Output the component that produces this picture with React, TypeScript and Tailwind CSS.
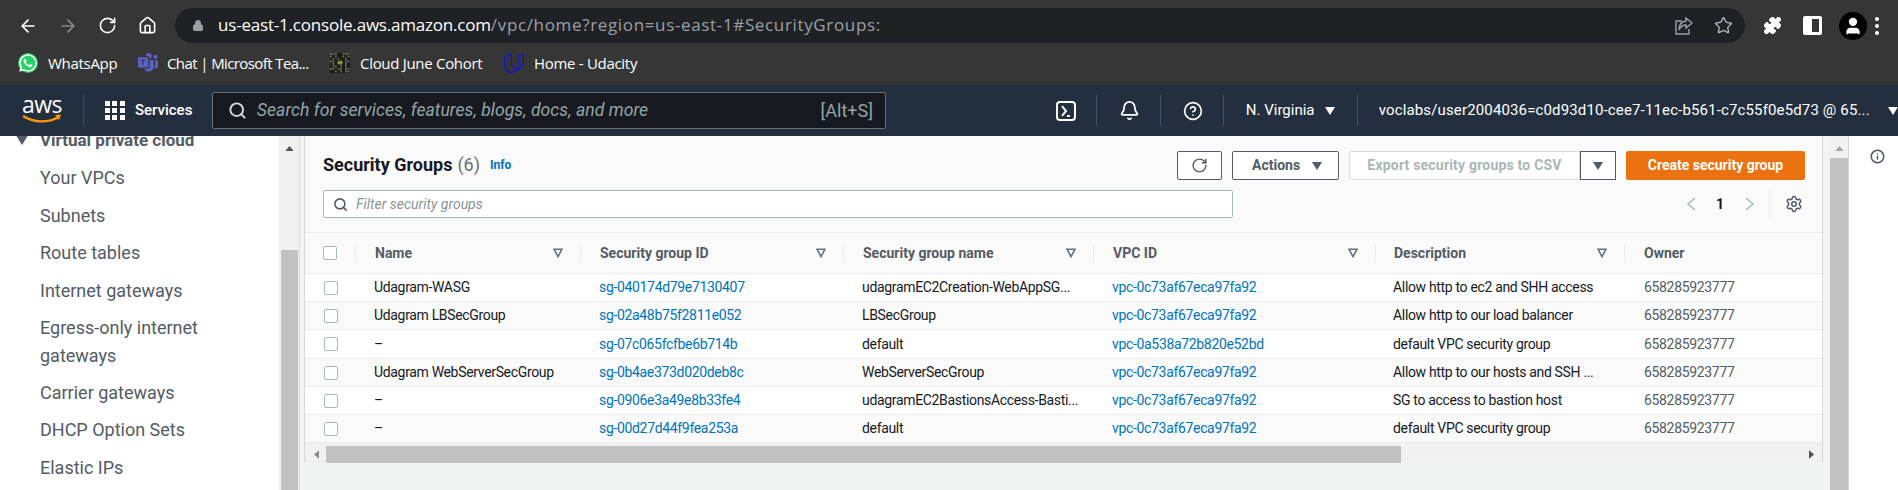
import { ArrowLeft, ArrowRight, RotateCw, Home, Lock, Star, Puzzle, User, Search, Bell, CircleHelp, Info, Settings } from "lucide-react";
import { FaWhatsapp } from "react-icons/fa";
import { SiUdacity } from "react-icons/si";
import { BsMicrosoftTeams } from "react-icons/bs";

const font = "font-['Roboto','Liberation_Sans',sans-serif]";

const navItems = [
  { t: "Your VPCs", h: "h-[38px]" },
  { t: "Subnets", h: "h-[37px]" },
  { t: "Route tables", h: "h-[38px]" },
  { t: "Internet gateways", h: "h-[37px]" },
  { t: "Egress-only internet gateways", h: "h-[65px]" },
  { t: "Carrier gateways", h: "h-[37px]" },
  { t: "DHCP Option Sets", h: "h-[38px]" },
  { t: "Elastic IPs", h: "h-[37px]" },
];

const columns = ["Name", "Security group ID", "Security group name", "VPC ID", "Description", "Owner"];

const rows = [
  { h: "h-[28px]", c: ["Udagram-WASG", "sg-040174d79e7130407", "udagramEC2Creation-WebAppSG...", "vpc-0c73af67eca97fa92", "Allow http to ec2 and SHH access"] },
  { h: "h-[28px]", c: ["Udagram LBSecGroup", "sg-02a48b75f2811e052", "LBSecGroup", "vpc-0c73af67eca97fa92", "Allow http to our load balancer"] },
  { h: "h-[29px]", c: ["–", "sg-07c065fcfbe6b714b", "default", "vpc-0a538a72b820e52bd", "default VPC security group"] },
  { h: "h-[28px]", c: ["Udagram WebServerSecGroup", "sg-0b4ae373d020deb8c", "WebServerSecGroup", "vpc-0c73af67eca97fa92", "Allow http to our hosts and SSH ..."] },
  { h: "h-[28px]", c: ["–", "sg-0906e3a49e8b33fe4", "udagramEC2BastionsAccess-Basti...", "vpc-0c73af67eca97fa92", "SG to access to bastion host"] },
  { h: "h-[28px]", c: ["–", "sg-00d27d44f9fea253a", "default", "vpc-0c73af67eca97fa92", "default VPC security group"] },
];

const gridCols = "grid grid-cols-[50px_225px_263px_250px_282px_249px_199px]";

function Caret({ className = "" }: { className?: string }) {
  return (
    <svg viewBox="0 0 10 8" className={className} fill="currentColor">
      <path d="M0 0h10L5 8z" />
    </svg>
  );
}

function FilterIcon() {
  return (
    <svg viewBox="0 0 10 10" className="w-[10px] h-[10px] text-[#687078]" fill="none" stroke="currentColor" strokeWidth="1.6">
      <path d="M1 1.2h8L5 8.6z" />
    </svg>
  );
}

function Checkbox() {
  return <span className="block w-[14px] h-[14px] rounded-[2px] border border-[#aab7b8] bg-white" />;
}

function QrIcon() {
  const cells = [0, 1, 2, 5, 6, 7, 8, 10, 13, 15, 17, 19, 22, 24, 25, 28, 30, 31, 33, 36, 38, 41, 42, 44, 46, 48, 49, 51, 52, 54, 55, 58, 60, 62, 63];
  return (
    <svg viewBox="0 0 64 64" className="w-[20px] h-[20px]">
      <rect width="64" height="64" fill="#1c1c1a" />
      {cells.map((c) => (
        <rect key={c} x={(c % 8) * 8} y={Math.floor(c / 8) * 8} width="6" height="6" fill="#6b6a5c" />
      ))}
      <rect x="24" y="26" width="16" height="10" fill="#7f9a3a" />
    </svg>
  );
}

function ChromeShare() {
  return (
    <svg viewBox="0 0 20 20" className="w-[20px] h-[20px]" fill="none" stroke="currentColor" strokeWidth="1.4">
      <path d="M8 5H2v13h13v-5" />
      <path d="M12 2l6 5-6 5V9C8.5 9 6.5 10.5 5 14c0-5 2.500-8.500 7-9z" />
    </svg>
  );
}

function ChromeBar() {
  return (
    <div className="bg-[#363636] h-[85px] border-b border-[#5f6368] box-content -mb-px">
      <div className="flex items-center h-[46px] pt-[5px]">
        <ArrowLeft className="w-[20px] h-[20px] ml-[18px] text-white" strokeWidth={2} />
        <ArrowRight className="w-[20px] h-[20px] ml-[20px] text-[#8a8a8a]" strokeWidth={2} />
        <RotateCw className="w-[19px] h-[19px] ml-[20px] text-white" strokeWidth={2} />
        <Home className="w-[19px] h-[19px] ml-[21px] text-white" strokeWidth={2} />
        <div className="flex items-center w-[1570px] h-[35px] ml-[18px] rounded-full bg-[#202124] pl-[17px]">
          <Lock className="w-[12px] h-[13px] text-[#9aa0a6]" fill="#9aa0a6" strokeWidth={2} />
          <div className="ml-[14px] -mt-[2px] text-[17px] font-['Open_Sans',sans-serif] whitespace-nowrap">
            <span className="text-white tracking-[-0.2px]">us-east-1.console.aws.amazon.com</span>
            <span className="text-[#9aa0a6] tracking-[0.65px]">/vpc/home?region=us-east-1#SecurityGroups:</span>
          </div>
          <div className="ml-auto flex items-center pr-[12px] text-[#9aa0a6]">
            <ChromeShare />
            <Star className="w-[19px] h-[19px] ml-[20px] text-[#bdc1c6]" strokeWidth={1.6} />
          </div>
        </div>
        <Puzzle className="w-[19px] h-[19px] ml-[18px] text-white" fill="white" strokeWidth={1.5} />
        <span className="block w-[19px] h-[19px] ml-[21px] border-[3px] border-white border-l-[9px] rounded-[2px] border-l-white" />
        <span className="flex items-center justify-center w-[28px] h-[28px] ml-[17px] rounded-full bg-black">
          <User className="w-[20px] h-[20px] text-white" fill="white" strokeWidth={2} />
        </span>
        <span className="ml-[8px] flex flex-col gap-[3px]">
          <i className="block w-[4px] h-[4px] rounded-full bg-white" />
          <i className="block w-[4px] h-[4px] rounded-full bg-white" />
          <i className="block w-[4px] h-[4px] rounded-full bg-white" />
        </span>
      </div>
      <div className="flex items-center h-[34px] pl-[18px] text-[15px] text-white font-['Open_Sans',sans-serif] tracking-[-0.3px]">
        <span className="flex items-center justify-center w-[20px] h-[20px] rounded-full bg-[#25d366] text-white">
          <FaWhatsapp className="w-[20px] h-[20px]" />
        </span>
        <span className="ml-[10px] w-[90px]">WhatsApp</span>
        <BsMicrosoftTeams className="w-[20px] h-[20px] text-[#5b5fc7]" />
        <span className="ml-[9px] w-[163px] whitespace-nowrap tracking-[-0.6px]">Chat | Microsoft Tea...</span>
        <QrIcon />
        <span className="ml-[10px] w-[144px] whitespace-nowrap">Cloud June Cohort</span>
        <SiUdacity className="w-[20px] h-[20px] text-[#1414d8]" />
        <span className="ml-[10px] whitespace-nowrap">Home - Udacity</span>
      </div>
    </div>
  );
}

function Divider({ className = "" }: { className?: string }) {
  return <span className={`block w-px h-[31px] bg-[#414d5c] ${className}`} />;
}

function AwsHeader() {
  return (
    <div className={`flex items-center h-[51px] bg-[#232f3e] text-white ${font}`}>
      <div className="ml-[22px] -mt-[2px] w-[40px] flex flex-col items-center">
        <span className="text-[23px] leading-[18px] font-['Open_Sans',sans-serif] tracking-[-0.5px]">aws</span>
        <svg viewBox="0 0 40 10" className="w-[40px] h-[10px] mt-[1px]" fill="none">
          <path d="M1 2c11 7 25 7 36 1" stroke="#ff9900" strokeWidth="2.4" />
          <path d="M33 1l6-.5-2 5.5z" fill="#ff9900" />
        </svg>
      </div>
      <Divider className="ml-[21px]" />
      <div className="ml-[21px] grid grid-cols-3 gap-[2px] w-[20px]">
        {Array.from({ length: 9 }).map((_, i) => (
          <i key={i} className="block w-[5px] h-[5px] bg-white" />
        ))}
      </div>
      <span className="ml-[10px] w-[77px] text-[15px] font-medium">Services</span>
      <div className="flex items-center w-[675px] h-[37px] bg-[#16191f] border border-[#687078] rounded-[2px] pl-[15px] pr-[12px]">
        <Search className="w-[19px] h-[19px] text-[#d5dbdb]" strokeWidth={2.4} />
        <span className="ml-[10px] text-[17.6px] italic text-[#95a5a6] tracking-[0.03px]">Search for services, features, blogs, docs, and more</span>
        <span className="ml-auto text-[18px] text-[#95a5a6]">[Alt+S]</span>
      </div>
      <svg viewBox="0 0 20 20" className="w-[20px] h-[20px] ml-[170px]" fill="none" stroke="white" strokeWidth="2">
        <rect x="1" y="1" width="18" height="18" rx="3" />
        <path d="M6 5l4 5-4 5M11 15h3" />
      </svg>
      <Divider className="ml-[20px]" />
      <Bell className="w-[21px] h-[21px] ml-[22px]" strokeWidth={2} />
      <Divider className="ml-[20px]" />
      <CircleHelp className="w-[20px] h-[20px] ml-[22px]" strokeWidth={2} />
      <Divider className="ml-[20px]" />
      <span className="ml-[22px] w-[72px] text-[15px] whitespace-nowrap">N. Virginia</span>
      <Caret className="w-[10px] h-[8px] ml-[7px]" />
      <Divider className="ml-[22px]" />
      <span className="ml-[21px] w-[504px] text-[15px] whitespace-nowrap tracking-[0.14px]">voclabs/user2004036=c0d93d10-cee7-11ec-b561-c7c55f0e5d73 @ 65...</span>
      <Caret className="w-[10px] h-[8px] ml-[6px]" />
    </div>
  );
}

function Sidebar() {
  return (
    <div className={`flex w-[300px] shrink-0 ${font}`}>
      <div className="w-[279px] bg-white overflow-hidden text-[#545b64] text-[18px]">
        <div className="flex items-center h-[23px] -mt-[7px] pl-[16px] text-[17px] font-bold">
          <Caret className="w-[12px] h-[9px] mr-[12px]" />
          <span>Virtual private cloud</span>
        </div>
        <div className="mt-[7px]">
          {navItems.map((n) => (
            <div key={n.t} className={`${n.h} pl-[40px] pr-[60px] flex items-center leading-[28px]`}>
              {n.t}
            </div>
          ))}
        </div>
      </div>
      <div className="w-[21px] bg-[#f1f1f1] border-r border-[#d5dbdb] pr-[1px] pl-[2px] flex flex-col items-center">
        <svg viewBox="0 0 10 6" className="w-[9px] h-[5px] mt-[10px] text-[#505050] shrink-0" fill="currentColor">
          <path d="M5 0l5 6H0z" />
        </svg>
        <div className="w-full h-[240px] mt-[99px] bg-[#c1c1c1]" />
      </div>
    </div>
  );
}

function Table() {
  return (
    <div className="h-[327px] bg-[#fafafa] border-x border-[#d5dbdb] overflow-hidden">
      <div className="h-[97px] pt-[15px] pl-[18px] pr-[17px] border-b border-[#eaeded]">
        <div className="flex items-center h-[29px]">
          <div className="flex items-center -mt-[2px]">
            <span className="text-[18px] font-bold text-[#16191f]">Security Groups</span>
            <span className="ml-[5px] text-[18px] text-[#687078]">(6)</span>
            <span className="ml-[10px] text-[12px] font-bold text-[#0073bb]">Info</span>
          </div>
          <div className="ml-auto flex h-[29px] text-[14px] font-bold">
            <button className="flex items-center justify-center w-[45px] border border-[#545b64] rounded-[2px] bg-white text-[#545b64]">
              <RotateCw className="w-[17px] h-[17px]" strokeWidth={2} />
            </button>
            <button className="flex items-center justify-between w-[107px] ml-[10px] pl-[19px] pr-[16px] border border-[#545b64] rounded-[2px] bg-white text-[#545b64]">
              Actions
              <Caret className="w-[10px] h-[8px]" />
            </button>
            <button className="flex items-center justify-center w-[231px] ml-[10px] border border-[#d5dbdb] rounded-l-[2px] bg-white text-[#aab7b8] tracking-[0.2px]">
              Export security groups to CSV
            </button>
            <button className="flex items-center justify-center w-[36px] border border-[#545b64] bg-white text-[#545b64]">
              <Caret className="w-[10px] h-[8px]" />
            </button>
            <button className="w-[179px] ml-[10px] rounded-[2px] bg-[#ec7211] text-white">Create security group</button>
          </div>
        </div>
        <div className="flex items-center mt-[10px] h-[28px]">
          <div className="flex items-center w-[910px] h-[28px] bg-white border border-[#aab7b8] rounded-[2px] pl-[9px]">
            <Search className="w-[15px] h-[15px] text-[#545b64]" strokeWidth={2.5} />
            <span className="ml-[8px] text-[14px] italic text-[#879596]">Filter security groups</span>
          </div>
          <div className="ml-auto flex items-center h-[28px] pr-[2px]">
            <svg viewBox="0 0 10 14" className="w-[10px] h-[14px] text-[#aab7b8]" fill="none" stroke="currentColor" strokeWidth="1.5">
              <path d="M9 1L2 7l7 6" />
            </svg>
            <span className="ml-[20px] text-[14px] font-bold text-[#16191f]">1</span>
            <svg viewBox="0 0 10 14" className="w-[10px] h-[14px] ml-[21px] text-[#aab7b8]" fill="none" stroke="currentColor" strokeWidth="1.5">
              <path d="M1 1l7 6-7 6" />
            </svg>
            <span className="block w-px h-[28px] ml-[14px] bg-[#eaeded]" />
            <Settings className="w-[18px] h-[18px] ml-[15px] text-[#545b64]" strokeWidth={2} />
          </div>
        </div>
      </div>
      <div className={`${gridCols} h-[41px] border-b border-[#eaeded] items-center text-[14px] font-bold text-[#545b64]`}>
        <div className="pl-[18px] flex items-center h-[20px]">
          <Checkbox />
        </div>
        {columns.map((c, i) => (
          <div key={c} className={`flex items-center h-[20px] border-l border-[#eaeded] pr-[17px] justify-between ${i === 4 ? "pl-[18px]" : "pl-[19px]"}`}>
            <span>{c}</span>
            {i < 5 && <FilterIcon />}
          </div>
        ))}
      </div>
      {rows.map((r, idx) => (
        <div key={r.c[1]} className={`${gridCols} ${r.h} border-b border-[#eaeded] items-center text-[14px] tracking-[-0.33px] text-[#16191f] ${idx % 2 ? "bg-[#fafafa]" : "bg-white"}`}>
          <div className="pl-[19px]">
            <Checkbox />
          </div>
          <div className="pl-[19px] whitespace-nowrap">{r.c[0]}</div>
          <div className="pl-[19px] text-[#0073bb] whitespace-nowrap">{r.c[1]}</div>
          <div className="pl-[19px] whitespace-nowrap">{r.c[2]}</div>
          <div className="pl-[19px] text-[#0073bb] whitespace-nowrap">{r.c[3]}</div>
          <div className="pl-[18px] whitespace-nowrap">{r.c[4]}</div>
          <div className="pl-[20px] text-[#545b64]">658285923777</div>
        </div>
      ))}
      <div className="flex items-center h-[20px] pt-[3px] bg-[#f1f1f1]">
        <svg viewBox="0 0 6 10" className="w-[5px] h-[9px] ml-[9px] text-[#8a8a8a]" fill="currentColor">
          <path d="M0 5l6-5v10z" />
        </svg>
        <div className="w-[1075px] h-[17px] ml-[7px] bg-[#c1c1c1]" />
        <svg viewBox="0 0 6 10" className="w-[5px] h-[9px] ml-auto mr-[8px] text-[#505050]" fill="currentColor">
          <path d="M6 5L0 0v10z" />
        </svg>
      </div>
    </div>
  );
}

export default function App() {
  return (
    <div className="w-[1898px] h-[490px] overflow-hidden flex flex-col bg-white">
      <ChromeBar />
      <AwsHeader />
      <div className="flex flex-1 min-h-0">
        <Sidebar />
        <div className={`flex-1 min-w-0 flex bg-[#f2f3f3] ${font}`}>
          <div className="w-[4px] shrink-0" />
          <div className="w-[1519px] shrink-0">
            <Table />
          </div>
          <div className="w-[7px] shrink-0" />
          <div className="w-[18px] shrink-0 bg-[#f1f1f1] flex flex-col items-center">
            <svg viewBox="0 0 10 6" className="w-[9px] h-[5px] mt-[10px] text-[#a3a3a3] shrink-0" fill="currentColor">
              <path d="M5 0l5 6H0z" />
            </svg>
            <div className="w-full flex-1 mt-[7px] bg-[#c1c1c1]" />
          </div>
          <div className="flex-1 bg-white border-l border-[#d5dbdb] flex justify-center pt-[13px] pl-[7px]">
            <Info className="w-[15px] h-[15px] text-[#545b64]" strokeWidth={2.5} />
          </div>
        </div>
      </div>
    </div>
  );
}
